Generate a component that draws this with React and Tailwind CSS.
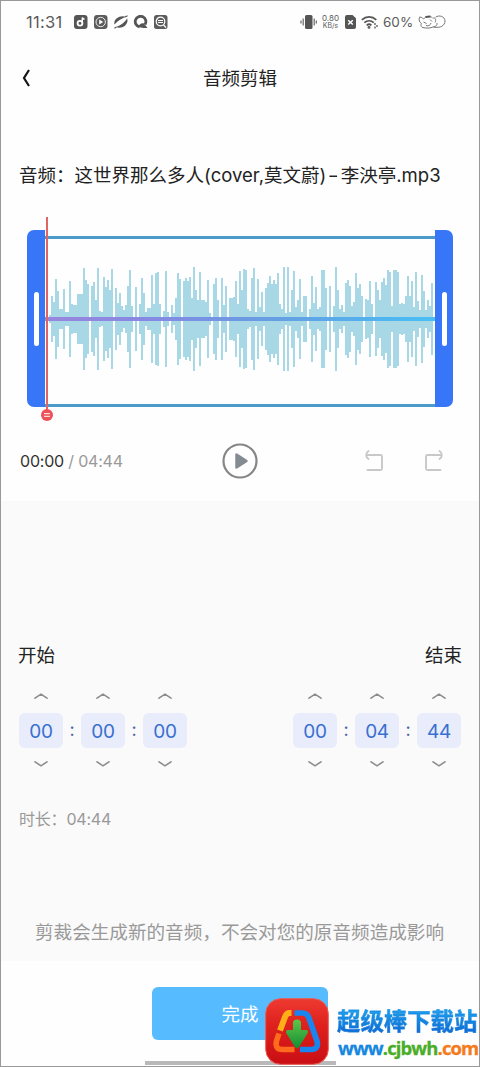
import React, { useState } from 'react';

// half heights of the bars, one every 2px
const WAVE = [
    0, 4, 23, 17, 40, 28, 10, 10, 30, 7, 7, 38, 15, 14, 14, 25, 25, 25, 51, 39, 35, 0, 33, 37, 19, 51, 8, 7, 42, 32,
    39, 29, 50, 0, 31, 16, 26, 13, 9, 14, 33, 49, 13, 0, 32, 0, 15, 41, 26, 7, 11, 11, 44, 15, 46, 47, 15, 0, 8, 48,
    7, 0, 14, 6, 21, 46, 40, 0, 38, 41, 38, 42, 21, 52, 29, 19, 47, 19, 19, 17, 39, 6, 0, 35, 41, 19, 0, 41, 14, 33,
    0, 21, 21, 22, 38, 15, 48, 29, 50, 49, 10, 8, 41, 51, 7, 40, 12, 27, 7, 31, 36, 43, 35, 39, 35, 46, 15, 10, 52, 6,
    52, 7, 29, 48, 12, 19, 40, 7, 23, 23, 0, 10, 43, 16, 32, 10, 12, 49, 49, 31, 0, 33, 0, 13, 52, 29, 10, 14, 7, 36,
    39, 33, 13, 17, 46, 31, 35, 23, 0, 20, 19, 38, 15, 0, 37, 29, 19, 37, 41, 34, 49, 47, 13, 49, 49, 47, 15, 16, 15, 23,
    43, 23, 38, 12, 47, 18, 9, 44, 28, 9, 19, 13, 36,
];

const StatusIcons = () => (
    <svg className="ml-[9px] w-[94px] h-[14px]" viewBox="0 0 94 14" fill="none">
        <rect width="13.500" height="14" rx="3" fill="#555" />
        <circle cx="6" cy="8.300" r="2.400" stroke="#fff" strokeWidth="1.800" />
        <path d="M8.300 8V2.600c.5 1 1.300 1.500 2.300 1.500" stroke="#fff" strokeWidth="1.400" />
        <rect x="20" width="13.500" height="14" rx="3" fill="#5c5c5c" />
        <circle cx="26.700" cy="7" r="4.700" stroke="#eee" strokeWidth="1" />
        <path d="M25.200 4.600v4.800L29.200 7z" fill="#fff" />
        <path d="M40.500 9.500C39 4 46-.5 52 1.800 47.500 3.500 43 6.500 40.500 9.500z" fill="#555" />
        <path d="M53.200 3.500C55 9.500 48 14.500 42 12c5-1.800 9-5 11.200-8.500z" fill="#555" />
        <path d="M42.500 12l-2 1.200M51 2l2.500-1.200" stroke="#555" strokeWidth="1.200" />
        <path d="M71 9.500A5.300 5.300 0 1 0 65.500 11.800" stroke="#555" strokeWidth="2.800" />
        <path d="M64 12c1.500-3.500 4-4.500 6-3.500l3.500 4.500h-4z" fill="#555" />
        <rect x="80" width="13.500" height="14" rx="2.500" fill="#5c5c5c" />
        <circle cx="86.500" cy="6.500" r="4.300" stroke="#fff" strokeWidth="1.200" />
        <path d="M84 5.500h5M84 7.500h5M89.500 10l2.500 2.500" stroke="#fff" strokeWidth="1.200" />
    </svg>
);

const StatusBar = () => (
    <div className="flex h-[42px] items-center pl-[25px] pr-[33px] text-[#5b5b5b]">
        <span className="w-[39px] whitespace-nowrap text-[16.500px] tracking-[0.300px]">11:31</span>
        <StatusIcons />
        <svg className="ml-auto w-[17px] h-[14px]" viewBox="0 0 17 14">
            <rect x="5" y="0" width="7.500" height="14" rx="1.500" fill="#555" />
            <path d="M3.200 3.500v7M14.200 3.500v7M1 5.500v3M16.300 5.500v3" stroke="#666" strokeWidth="1.200" />
        </svg>
        <div className="ml-1 flex w-[19px] flex-col items-center whitespace-nowrap text-[8px] leading-[7px]">
            <span>0.80</span>
            <span className="text-[7px]">KB/s</span>
        </div>
        <svg className="ml-[5px] w-[11px] h-[14px]" viewBox="0 0 11 14">
            <path d="M2 0h5.500L11 3.300V12a2 2 0 0 1-2 2H2a2 2 0 0 1-2-2V2a2 2 0 0 1 2-2z" fill="#555" />
            <path d="M3.200 5.200l4.600 4.300M7.800 5.200L3.200 9.500" stroke="#fff" strokeWidth="1.500" />
        </svg>
        <svg className="ml-[5px] w-[18px] h-[14px]" viewBox="0 0 18 14" fill="none" stroke="#555" strokeWidth="1.700">
            <path d="M.8 4.800c4.300-4 10.300-4 14.500 0M3.300 7.700c2.900-2.600 6.700-2.600 9.500 0M5.700 10.300c1.500-1.300 3.300-1.300 4.700 0" />
            <circle cx="8" cy="12.400" r=".6" />
            <path d="M14 8v2M14 11.500v2M16 10v2" strokeWidth="1.300" />
        </svg>
        <span className="ml-[4px] w-[29px] whitespace-nowrap text-[13.500px]">60%</span>
        <svg className="ml-[6px] w-[28px] h-[14px]" viewBox="0 0 28 14" fill="none" stroke="#777" strokeWidth="1">
            <path d="M1.500 2c2 0 3 1 4 2 2.500-3 6.500-3.500 9-1M1.500 2C.5 5 1.500 7.500 3.500 8.500c-1 1.500-.5 3 .5 3.800 4 1.200 8.500 1 11.500-.5M5.500 7l3 1.500M12 4.500l2 2M8 10.500c2.500 1 4.500-.5 5-2.500" />
            <path d="M15 3c2.500-.5 3.500 2 2 4.500M17.500 2.300c3.500-2.800 9.500-.8 9.500 3.700s-4.500 7.500-11.500 6c2.500-.5 4-2 3.500-4" />
            <path d="M7.500 2l5-.5" strokeWidth="2" stroke="#555" />
        </svg>
    </div>
);

const Handle = ({ side }) => (
    <div
        className={`mt-[13px] flex h-[177px] w-[18px] shrink-0 items-center justify-center bg-[#3776f6] ${side === 'left' ? 'rounded-l-[7px]' : 'rounded-r-[7px]'}`}
    >
        <div className="h-[54px] w-[5px] rounded-full bg-white" />
    </div>
);

const Waveform = () => (
    <div className="relative mx-[26px] mt-[28px] flex h-[206px] items-start">
        <Handle side="left" />
        <div className="mt-[19px] flex h-[171px] flex-1 flex-col justify-center border-y-[3px] border-[#4c9aca]">
            <svg className="h-[165px] w-full" viewBox="0 0 390 165" shapeRendering="crispEdges">
                <defs>
                    <linearGradient id="axis">
                        <stop offset="0" stopColor="#9886dd" />
                        <stop offset=".25" stopColor="#8888e3" />
                        <stop offset=".6" stopColor="#649fe3" />
                        <stop offset="1" stopColor="#48bff6" />
                    </linearGradient>
                </defs>
                {WAVE.map((h, i) => (
                    <rect key={i} x={2 + i * 2} y={80 - h} width="2" height={h * 2} fill="#a8d8e5" />
                ))}
                <rect x="0" y="78" width="390" height="4" fill="url(#axis)" />
            </svg>
        </div>
        <Handle side="right" />
        <div className="absolute left-[19px] top-0 h-[194px] w-[2px] bg-[#df6663]" />
        <svg className="absolute left-[14px] top-[192px] h-3 w-3" viewBox="0 0 12 12">
            <circle cx="6" cy="6" r="6" fill="#ed5356" />
            <path d="M3 4.700h6M3 7.300h6" stroke="#fff" />
        </svg>
    </div>
);

const UndoIcon = ({ className }) => (
    <svg className={className} viewBox="0 0 18 22" fill="none" stroke="#c8c8c8" strokeWidth="1.900" strokeLinecap="round" strokeLinejoin="round">
        <path d="M3.500 1Q1.200 2.500 1.200 5t2.300 4M1.500 5H15.500a1.500 1.500 0 0 1 1.500 1.500v12a1.500 1.500 0 0 1-1.500 1.500H2.500" />
    </svg>
);

const Chevron = ({ down }) => (
    <svg className={`h-[6px] w-[14px] ${down ? 'rotate-180' : ''}`} viewBox="0 0 14 6" fill="none">
        <path d="M1 5.200l6-4 6 4" stroke="#8c8c8c" strokeWidth="1.600" strokeLinecap="round" />
    </svg>
);

const TimePicker = ({ values }) => (
    <div className="flex">
        {values.map((v, i) => (
            <React.Fragment key={i}>
                {i > 0 && <span className="w-[18px] pt-[23px] text-center text-[18px] leading-[28px] text-[#4a62a8]">:</span>}
                <div className="flex w-[44px] flex-col items-center">
                    <Chevron />
                    <div className="mt-[14px] mb-[13px] flex h-[35px] w-full items-center justify-center rounded-[6px] bg-[#e8ecfb] pt-[3px] text-[19px] tracking-[-0.300px] text-[#396fd0]">
                        {v}
                    </div>
                    <Chevron down />
                </div>
            </React.Fragment>
        ))}
    </div>
);

const Watermark = () => (
    <div className="absolute left-[264px] top-[996px] flex h-[68px]">
        <svg className="h-[68px] w-[64px]" viewBox="0 0 64 68" fill="none">
            <defs>
                <linearGradient id="red" x2="0" y2="1">
                    <stop stopColor="#ee3a31" />
                    <stop offset=".4" stopColor="#de211d" />
                    <stop offset="1" stopColor="#c90e14" />
                </linearGradient>
                <linearGradient id="green" x2="0" y2="1">
                    <stop stopColor="#5fc648" />
                    <stop offset="1" stopColor="#128f35" />
                </linearGradient>
            </defs>
            <rect x=".7" y="1.700" width="62.600" height="65.600" rx="15" fill="url(#red)" stroke="#ef5a50" />
            <path d="M26.500 16h-2q-3 0-4.500 4l-5 13.500" stroke="#ffae18" strokeWidth="6" />
            <path d="M14 36.500L11.500 44q-2 8.500 6 8.500h12" stroke="#ff6b1c" strokeWidth="5.500" />
            <path d="M29.500 16h8.500q4 0 6 5l8 23q2 8.500-6 8.500H35" stroke="#1985ee" strokeWidth="5.700" />
            <path d="M28 26q0-3.500 4-3.500t4 3.500v7h5.500q2.500 1 1 3.500L34 50q-2 2.500-4 0l-8.500-13.500q-1.500-2.500 1-3.500H28z" fill="url(#green)" />
        </svg>
        <div className="ml-[8px] flex flex-col whitespace-nowrap font-bold">
            <span className="mt-[10px] h-[30px] bg-gradient-to-b from-[#20a8ef] to-[#1160cf] bg-clip-text text-[23.400px] leading-[30px] text-transparent [-webkit-text-stroke:0.300px_#157bdc]">
                超级棒下载站
            </span>
            <span className="flex h-[22px] pl-px font-['Open_Sans',sans-serif] text-[18.500px] leading-[21px] tracking-[-0.900px] [-webkit-text-stroke:0.300px]">
                <span className="text-[#1687df]">www</span>
                <span className="text-[#49ad27]">.cjbwh</span>
                <span className="text-[#f47b1c]">.com</span>
            </span>
        </div>
    </div>
);

export default function App() {
    const [playing, setPlaying] = useState(false);

    return (
        <div className="relative flex h-[1067px] w-[480px] flex-col overflow-hidden border border-[#999] bg-[#fefefe] font-[Inter,'Noto_Sans_CJK_SC',sans-serif] text-[#222]">
            <StatusBar />

            <header className="mt-[2px] flex h-[68px] items-center px-[21px]">
                <svg className="-mt-[2px] h-[18px] w-[9px]" viewBox="0 0 9 18" fill="none">
                    <path d="M7 1L2 9l5 8" stroke="#151515" strokeWidth="2.200" />
                </svg>
                <h1 className="flex-1 pr-[9px] text-center text-[18.500px]">音频剪辑</h1>
            </header>

            <p className="mt-[48px] h-[28px] whitespace-nowrap pl-[18px] text-[18.500px] leading-[28px]">
                音频：这世界那么多人(cover,莫文蔚)<span className="mx-[3px] inline-block scale-x-130">-</span>李泱亭.mp3
            </p>

            <Waveform />

            <div className="flex h-[78px] items-center px-[19px] pb-[2px]">
                <div className="w-[202px] text-[16px] tracking-[-0.200px] text-[#999]">
                    <span className="text-[#333]">00:00</span> / 04:44
                </div>
                <button onClick={() => setPlaying(!playing)}>
                    <svg className="h-[36px] w-[36px]" viewBox="0 0 36 36">
                        <circle cx="18" cy="18" r="16.500" fill="none" stroke="#868686" strokeWidth="2.200" />
                        <path d="M14.500 11.500v13l10-6.500z" fill="#858b92" stroke="#858b92" strokeWidth="2.500" strokeLinejoin="round" />
                    </svg>
                </button>
                <UndoIcon className="ml-auto h-[22px] w-[18px]" />
                <UndoIcon className="ml-[42px] mr-[17px] h-[22px] w-[18px] -scale-x-100" />
            </div>

            <main className="flex h-[460px] flex-col bg-[#fafafa] px-[17px] pt-[140px]">
                <div className="flex justify-between text-[18.500px] leading-[28px]">
                    <span>开始</span>
                    <span>结束</span>
                </div>
                <div className="mt-[24px] flex justify-between pl-px pr-px">
                    <TimePicker values={['00', '00', '00']} />
                    <TimePicker values={['00', '04', '44']} />
                </div>
                <p className="mt-[40px] pl-px text-[16px] leading-[24px] tracking-[-0.200px] text-[#999]">时长：04:44</p>
                <p className="mt-[87px] -ml-px whitespace-nowrap text-center text-[18.600px] leading-[28px] text-[#999]">
                    剪裁会生成新的音频，不会对您的原音频造成影响
                </p>
            </main>

            <footer className="flex flex-col items-center pt-[26px]">
                <button className="h-[53px] w-[176px] rounded-[6px] bg-[#57bcff] pt-[2px] text-[18.500px] text-white">完成</button>
                <div className="mt-[21px] h-[4px] w-[191px] bg-[#b9b9b9]" />
            </footer>

            <Watermark />
        </div>
    );
}
